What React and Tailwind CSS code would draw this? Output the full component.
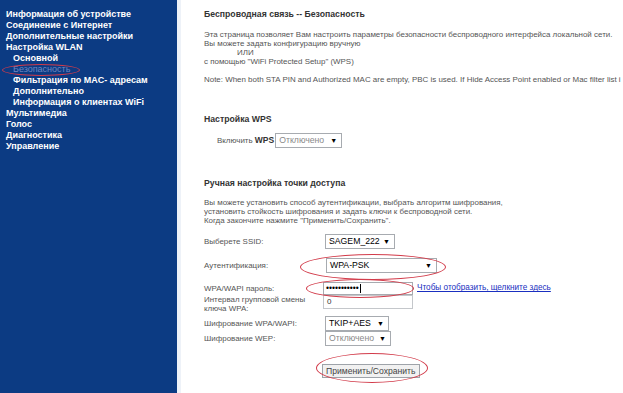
import React from "react";

const menu = [
  { label: "Информация об устройстве", sub: false },
  { label: "Соединение с Интернет", sub: false },
  { label: "Дополнительные настройки", sub: false },
  { label: "Настройка WLAN", sub: false },
  { label: "Основной", sub: true },
  { label: "Безопасность", sub: true, active: true },
  { label: "Фильтрация по MAC- адресам", sub: true },
  { label: "Дополнительно", sub: true },
  { label: "Информация о клиентах WiFi", sub: true },
  { label: "Мультимедиа", sub: false },
  { label: "Голос", sub: false },
  { label: "Диагностика", sub: false },
  { label: "Управление", sub: false },
];

function Select({ value, className = "", muted = false }) {
  return (
    <div
      className={`flex h-[15px] items-center justify-between border border-[#a7abb0] bg-white pl-[3px] pr-[4px] ${className}`}
    >
      <span className={`text-[8.7px] leading-none ${muted ? "text-[#8a8a8a]" : "text-black"}`}>{value}</span>
      <span className="text-[7px] leading-none text-black">▼</span>
    </div>
  );
}

function Ring({ className }) {
  return <div className={`pointer-events-none absolute rounded-[50%] border border-[#d23b4a] ${className}`} />;
}

export default function App() {
  return (
    <div className="flex h-[393px] w-[623px] overflow-hidden bg-white font-['Liberation_Sans',sans-serif]">
      <aside className="relative h-full w-[177px] shrink-0 bg-[#0c3b83] pt-[9px]">
        <ul className="text-[9px] font-bold leading-[11px] text-white">
          {menu.map((m) => (
            <li key={m.label} className={`${m.sub ? "pl-[13px]" : "pl-[6px]"} ${m.active ? "text-[#6f86c0] font-normal" : ""}`}>
              {m.label}
            </li>
          ))}
        </ul>
        <Ring className="left-[2px] top-[64px] h-[12px] w-[78px] border-[#c44b66]" />
      </aside>
      <div className="w-[4px] shrink-0 bg-[#eef2f8]" />

      <main className="relative min-w-0 flex-1 overflow-hidden pl-[23px] text-[#555]">
        <h1 className="mt-[9px] text-[8.7px] font-bold leading-[11px] text-[#333]">Беспроводная связь -- Безопасность</h1>
        <div className="mt-[10px] whitespace-nowrap text-[7.95px] leading-[9px]">
          <p>Эта страница позволяет Вам настроить параметры безопасности беспроводного интерфейса локальной сети.</p>
          <p>Вы можете задать конфигурацию вручную</p>
          <p className="pl-[33px]">ИЛИ</p>
          <p>с помощью "WiFi Protected Setup" (WPS)</p>
        </div>
        <p className="mt-[9px] whitespace-nowrap text-[7.95px] leading-[9px]">
          Note: When both STA PIN and Authorized MAC are empty, PBC is used. If Hide Access Point enabled or Mac filter list i
        </p>

        <h2 className="mt-[30px] text-[8.7px] font-bold leading-[11px] text-[#333]">Настройка WPS</h2>
        <div className="mt-[8px] flex items-center pl-[13px] text-[7.95px]">
          <span>Включить <b className="text-[8.5px] text-[#333]">WPS</b></span>
          <Select value="Отключено" muted className="ml-[1px] w-[67px]" />
        </div>

        <h2 className="mt-[30px] text-[8.7px] font-bold leading-[11px] text-[#333]">Ручная настройка точки доступа</h2>
        <div className="mt-[9px] text-[7.95px] leading-[9px]">
          <p>Вы можете установить способ аутентификации, выбрать алгоритм шифрования,</p>
          <p>установить стойкость шифрования и задать ключи к беспроводной сети.</p>
          <p>Когда закончите нажмите "Применить/Сохранить".</p>
        </div>

        <div className="mt-[9px] text-[7.95px]">
          <div className="flex h-[15px] items-center">
            <span className="w-[121px]">Выберете SSID:</span>
            <Select value="SAGEM_222" className="w-[70px]" />
          </div>
          <div className="mt-[9px] flex h-[15px] items-center">
            <span className="w-[122px]">Аутентификация:</span>
            <Select value="WPA-PSK" className="w-[111px]" />
          </div>
          <div className="mt-[9px] flex h-[13px] items-center">
            <span className="w-[119px]">WPA/WAPI пароль:</span>
            <div className="flex h-[13px] w-[90px] items-center border border-[#a7abb0] bg-white pl-[2px] text-[8.5px] leading-none text-black">
              •••••••••••<span className="ml-[1px] h-[9px] w-px bg-black" />
            </div>
            <a className="ml-[4px] text-[8.2px] text-[#1a2fc0] underline">Чтобы отобразить, щелкните здесь</a>
          </div>
          <div className="flex items-start">
            <span className="w-[119px] leading-[9px]">
              Интервал групповой смены
              <br />
              ключа WPA:
            </span>
            <div className="flex h-[14px] w-[90px] items-center border border-[#c4c7cb] bg-white pl-[3px] text-[8px] text-[#333]">0</div>
          </div>
          <div className="mt-[3px] flex h-[15px] items-center">
            <span className="w-[121px]">Шифрование WPA/WAPI:</span>
            <Select value="TKIP+AES" className="w-[64px]" />
          </div>
          <div className="flex h-[15px] items-center">
            <span className="w-[121px]">Шифрование WEP:</span>
            <Select value="Отключено" muted className="w-[66px]" />
          </div>
          <div className="mt-[18px] flex pl-[118px]">
            <button className="h-[14px] border border-[#9ea3a9] bg-[#f1f1f1] px-[3px] text-[8.6px] leading-none text-[#444]">
              Применить/Сохранить
            </button>
          </div>
        </div>

        <Ring className="left-[119px] top-[254px] h-[26px] w-[146px]" />
        <Ring className="left-[125px] top-[279px] h-[19px] w-[108px]" />
        <Ring className="left-[135px] top-[353px] h-[30px] w-[112px]" />
      </main>
    </div>
  );
}
